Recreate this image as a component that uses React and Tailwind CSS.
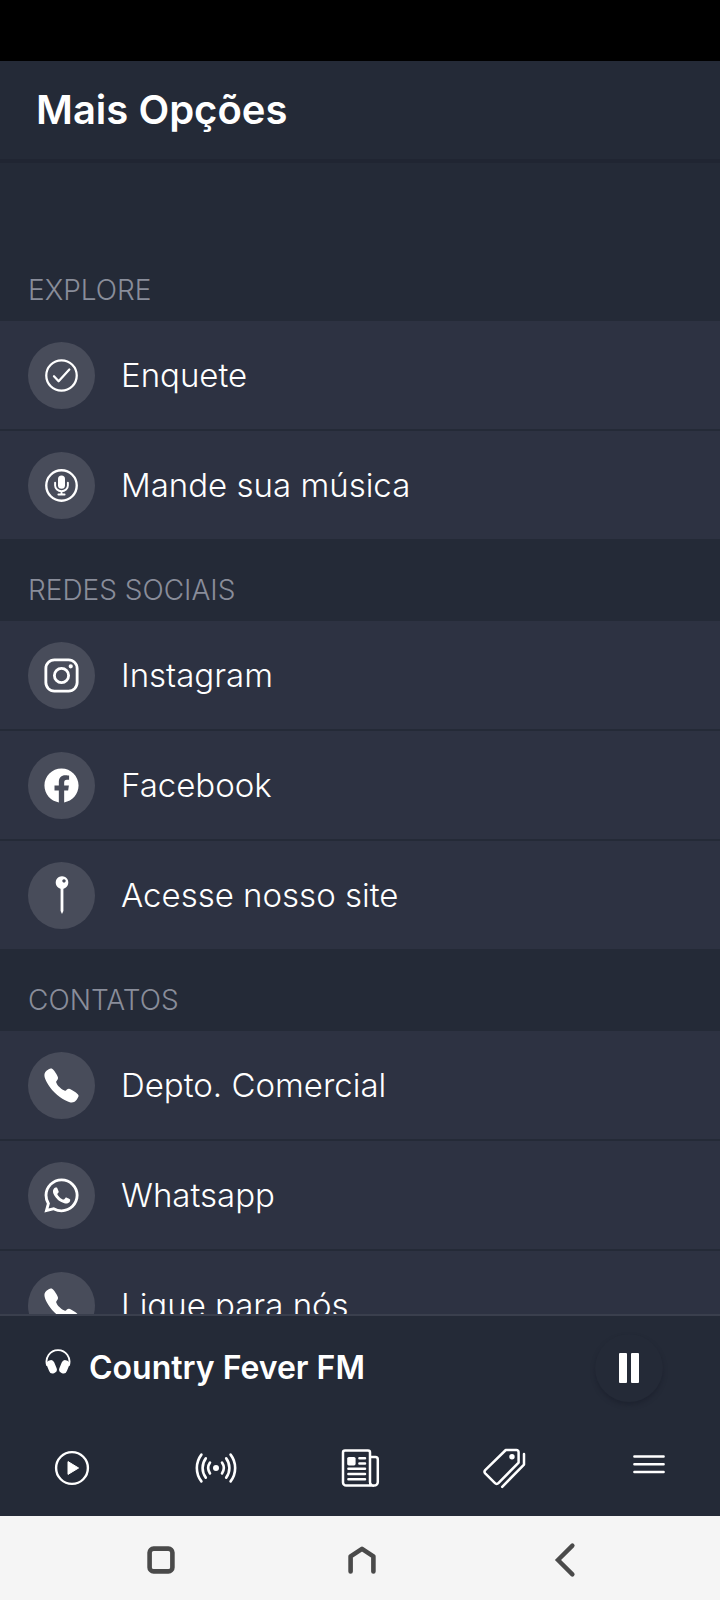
import React, { useState } from 'react'
import { IoCall, IoLogoFacebook, IoLogoInstagram, IoLogoWhatsapp } from 'react-icons/io5'

const CheckCircle = () => (
  <svg width="35" height="35" viewBox="-17 -17 34 34" fill="none" stroke="currentColor" strokeWidth="2.2" strokeLinecap="round" strokeLinejoin="round">
    <circle r="14.8" />
    <path d="M-7.3 .8 L-2.8 5.6 L7.6 -5.8" />
  </svg>
)

const MicCircle = () => (
  <svg width="35" height="35" viewBox="-17 -17 34 34" fill="none" stroke="currentColor" strokeLinecap="round">
    <circle r="14.8" strokeWidth="2.3" />
    <rect x="-3.4" y="-9.8" width="6.8" height="13" rx="3.4" fill="currentColor" stroke="none" />
    <path d="M-6.2 -2.6 V0 A6.2 5.6 0 0 0 6.2 0 V-2.6 M0 5.6 V8.6 M-3 8.8 H3" strokeWidth="1.9" />
  </svg>
)

const Pin = () => (
  <svg width="38" height="38" viewBox="-19 -19 38 38">
    <path fill="currentColor" fillRule="evenodd" d="M0 -18.8 a6.3 6.3 0 1 0 .01 0 Z M2 -15.8 a1.7 1.7 0 1 1 -.01 0 Z" />
    <path fill="currentColor" d="M-1.4 -7 H1.4 V16 L0 19 L-1.4 16 Z" />
  </svg>
)

const Headphones = () => (
  <svg width="26" height="26" viewBox="0 0 26 26" fill="none" stroke="currentColor">
    <path d="M2.2 17.6 A11.5 11.5 0 1 1 23.8 17.6" strokeWidth="1.8" />
    <rect x="2.7" y="12" width="8" height="13.6" rx="3.8" fill="currentColor" stroke="none" transform="rotate(-22 6.7 18.8)" />
    <rect x="15.3" y="12" width="8" height="13.6" rx="3.8" fill="currentColor" stroke="none" transform="rotate(22 19.3 18.8)" />
  </svg>
)

const PlayCircle = () => (
  <svg width="44" height="44" viewBox="-22 -22 44 44">
    <circle r="15.9" fill="none" stroke="currentColor" strokeWidth="2.4" />
    <path d="M-4 -6.4 L6.6 0 L-4 6.4 Z" fill="currentColor" stroke="currentColor" strokeLinejoin="round" />
  </svg>
)

const Broadcast = () => (
  <svg width="44" height="44" viewBox="-22 -22 44 44" fill="none" stroke="currentColor" strokeWidth="2.6" strokeLinecap="round">
    <circle r="3" fill="currentColor" stroke="none" />
    <path d="M-6 -5.4 A9.6 9.6 0 0 0 -6 5.4 M-10.2 -9.6 A16 16 0 0 0 -10.2 9.6 M-14.6 -13.4 A22 22 0 0 0 -14.6 13.4" />
    <path d="M6 -5.4 A9.6 9.6 0 0 1 6 5.4 M10.2 -9.6 A16 16 0 0 1 10.2 9.6 M14.6 -13.4 A22 22 0 0 1 14.6 13.4" />
  </svg>
)

const News = () => (
  <svg width="44" height="44" viewBox="0 0 44 44" fill="none" stroke="currentColor" strokeWidth="2.5" strokeLinecap="round" strokeLinejoin="round">
    <path d="M36 39.6 H8.2 A3.2 3.2 0 0 1 5 36.4 V6.6 A2 2 0 0 1 7 4.6 H30 A2 2 0 0 1 32 6.6 V36 A3.5 3.5 0 0 0 36 39.6 A3.6 3.6 0 0 0 39.8 36 V13.4 A2.4 2.4 0 0 0 37.4 11 H32.6" />
    <rect x="9.2" y="11" width="8.4" height="8.4" rx="1.6" fill="currentColor" stroke="none" />
    <path d="M21.4 12.2 H27 M21.4 17.6 H27 M10.4 22.8 H27 M10.4 28 H27 M10.4 33.2 H27" />
  </svg>
)

const Tags = () => (
  <svg width="44" height="44" viewBox="0 0 44 44" fill="none" stroke="currentColor" strokeWidth="2.5" strokeLinecap="round" strokeLinejoin="round">
    <path d="M23.8 4 H34.4 A2.2 2.2 0 0 1 36.6 6.2 V16.6 L16.4 37.2 A2.4 2.4 0 0 1 13 37.2 L3.2 27.4 A2.4 2.4 0 0 1 3.2 24.2 Z" />
    <path d="M42 8 V18.6 L20.2 40.8" />
    <circle cx="30" cy="10.8" r="2.7" fill="currentColor" stroke="none" />
  </svg>
)

const Menu = () => (
  <svg width="44" height="44" viewBox="0 0 44 44" fill="none" stroke="currentColor" strokeWidth="2.5" strokeLinecap="round">
    <path d="M8.4 10.4 H37.6 M8.4 18.2 H37.6 M8.4 26 H37.6" />
  </svg>
)

const sections = [
  {
    title: 'EXPLORE',
    items: [
      { label: 'Enquete', icon: <CheckCircle /> },
      { label: 'Mande sua música', icon: <MicCircle /> },
    ],
  },
  {
    title: 'REDES SOCIAIS',
    items: [
      { label: 'Instagram', icon: <IoLogoInstagram size={39} /> },
      { label: 'Facebook', icon: <IoLogoFacebook size={39} /> },
      { label: 'Acesse nosso site', icon: <Pin /> },
    ],
  },
  {
    title: 'CONTATOS',
    items: [
      { label: 'Depto. Comercial', icon: <IoCall size={39} /> },
      { label: 'Whatsapp', icon: <IoLogoWhatsapp size={39} /> },
      { label: 'Ligue para nós', icon: <IoCall size={39} /> },
    ],
  },
]

const tabs = [
  { label: 'Ao vivo', icon: <PlayCircle /> },
  { label: 'Rádio', icon: <Broadcast /> },
  { label: 'Notícias', icon: <News /> },
  { label: 'Promoções', icon: <Tags /> },
  { label: 'Mais opções', icon: <Menu /> },
]

function Section({ title, items }) {
  return (
    <section>
      <h2 className="flex h-[82px] items-end px-7 pb-4 text-[28px] leading-[30px] font-light text-[#898d9a]">{title}</h2>
      <ul className="flex flex-col gap-0.5">
        {items.map(item => (
          <li key={item.label}>
            <a href="#" className="flex h-[108px] items-center gap-[26px] bg-[#2d3242] px-7 text-[33px] leading-10 font-light text-white">
              <span className="flex size-[67px] shrink-0 items-center justify-center rounded-full bg-[#484c5a]">{item.icon}</span>
              {item.label}
            </a>
          </li>
        ))}
      </ul>
    </section>
  )
}

export default function App() {
  const [playing, setPlaying] = useState(true)

  return (
    <div className="flex h-screen flex-col bg-[#242a37] font-['Inter',sans-serif] text-white">
      {/* Status bar */}
      <div className="h-[61px] shrink-0 bg-black" />

      <header className="flex h-[98px] shrink-0 items-center px-9">
        <h1 className="text-[40px] leading-[48px] font-semibold">Mais Opções</h1>
      </header>

      <main className="min-h-0 flex-1 overflow-y-auto border-t-4 border-[#202532] pt-[76px] [scrollbar-width:none]">
        {sections.map(section => (
          <Section key={section.title} {...section} />
        ))}
      </main>

      {/* Player */}
      <div className="flex h-[106px] shrink-0 items-center border-t-2 border-[#3a3f4d] pr-[57px] pl-[45px]">
        <div className="flex flex-1 items-start gap-[18px]">
          <Headphones />
          <p className="text-[32px] leading-10 font-semibold">Country Fever FM</p>
        </div>
        <button
          type="button"
          aria-label={playing ? 'Pausar' : 'Tocar'}
          onClick={() => setPlaying(!playing)}
          className="flex size-[68px] items-center justify-center rounded-full bg-[#242a37] shadow-[0_3px_4px_#1e2330]"
        >
          <svg width="30" height="30" viewBox="0 0 30 30" fill="currentColor">
            {playing ? (
              <>
                <rect x="5" width="8" height="30" rx="1" />
                <rect x="17" width="8" height="30" rx="1" />
              </>
            ) : (
              <path d="M5 0 L27 15 L5 30 Z" />
            )}
          </svg>
        </button>
      </div>

      <nav className="grid h-24 shrink-0 grid-cols-5">
        {tabs.map(tab => (
          <button key={tab.label} type="button" aria-label={tab.label} className="flex items-center justify-center">
            {tab.icon}
          </button>
        ))}
      </nav>

      {/* Android navigation */}
      <div className="grid h-[84px] shrink-0 grid-cols-3 bg-[#f5f5f5] pt-1 pr-[54px] pl-[60px] text-[#4a4a4a]">
        <button type="button" aria-label="Recentes" className="flex items-center justify-center">
          <svg width="36" height="36" viewBox="-18 -18 36 36" fill="none" stroke="currentColor" strokeWidth="4.6">
            <rect x="-11.4" y="-11.4" width="22.8" height="22.8" rx="4" />
          </svg>
        </button>
        <button type="button" aria-label="Início" className="flex items-center justify-center">
          <svg width="36" height="36" viewBox="-17 -18 36 36" fill="none" stroke="currentColor" strokeWidth="4.6" strokeLinecap="round" strokeLinejoin="round">
            <path d="M-11.4 11.4 V-3.6 L0 -11.2 L11.4 -3.6 V11.4" />
          </svg>
        </button>
        <button type="button" aria-label="Voltar" className="flex items-center justify-center">
          <svg width="36" height="36" viewBox="-18 -18 36 36" fill="none" stroke="currentColor" strokeWidth="4.4" strokeLinecap="round" strokeLinejoin="miter">
            <path d="M7.4 -14.4 L-7 0 L7.4 14.4" />
          </svg>
        </button>
      </div>
    </div>
  )
}
